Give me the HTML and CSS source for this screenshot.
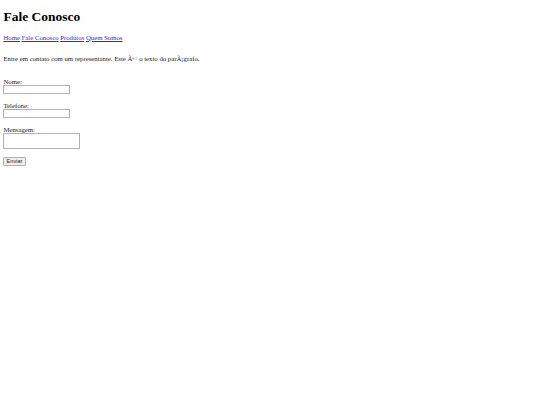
FILE: index.html
```html
<!DOCTYPE html>
<html lang="pt">
<head>
<meta charset="utf-8">
<title>Fale Conosco</title>
<link rel="stylesheet" href="styles.css">
</head>
<body>
<h1 class="title">Fale Conosco</h1>
<nav class="menu">
  <a href="#">Home</a> <a href="#">Fale Conosco</a> <a href="#">Produtos</a> <a href="#">Quem Somos</a>
</nav>
<p class="intro">Entre em contato com um representante. Este Ã© o texto do parÃ¡grafo.</p>
<form class="contact">
  <div class="field">
    <label class="label" for="nome">Nome:</label>
    <input class="input" id="nome" type="text">
  </div>
  <div class="field">
    <label class="label" for="tel">Telefone:</label>
    <input class="input" id="tel" type="text">
  </div>
  <div class="field">
    <label class="label" for="msg">Mensagem:</label>
    <textarea class="area" id="msg"></textarea>
  </div>
  <div class="field">
    <button class="btn" type="button">Enviar</button>
  </div>
</form>
</body>
</html>
```
FILE: styles.css
```css
html, body {
  background: #fff;
}
body {
  margin: 0;
  padding: 0 3.4px;
  font-family: "Liberation Serif", "Times New Roman", serif;
  font-size: 6.75px;
  line-height: 7.75px;
  color: #222;
}
.title {
  margin: 9px 0 0 0;
  font-size: 13.5px;
  line-height: 15.5px;
  font-weight: bold;
  color: #000;
}
.menu {
  margin-top: 9px;
}
.menu a {
  color: #2a2ae6;
  text-decoration: underline;
}
.intro {
  margin: 13.75px 0 0 0;
}
.contact {
  margin-top: 15.25px;
  margin-left: -0.4px;
  display: flex;
  flex-direction: column;
  align-items: flex-start;
  gap: 8px;
}
.field {
  display: flex;
  flex-direction: column;
  align-items: flex-start;
}
.label {
  display: block;
  height: 7px;
  line-height: 7px;
  margin-left: 0.4px;
}
.input {
  box-sizing: border-box;
  width: 67px;
  height: 9px;
  margin: 0;
  padding: 0;
  border: 1px solid #b0b0b0;
  border-radius: 0;
  background: #fff;
  font-size: 5.6px;
}
.area {
  box-sizing: border-box;
  width: 77px;
  height: 16px;
  margin: 0;
  padding: 0;
  border: 1px solid #b0b0b0;
  border-radius: 0;
  background: #fff;
  font-size: 5.6px;
  resize: none;
}
.btn {
  box-sizing: border-box;
  margin: 0;
  width: 23px;
  height: 9px;
  padding: 0;
  border: 1px solid #b0b0b0;
  border-radius: 1px;
  background: #efefef;
  font-family: "Liberation Sans", Arial, sans-serif;
  font-size: 5.6px;
  line-height: 7px;
  color: #222;
}
```
